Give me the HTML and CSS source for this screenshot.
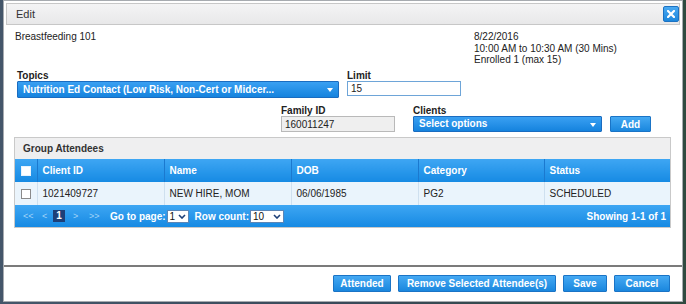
FILE: index.html
```html
<!DOCTYPE html>
<html lang="en">

<head>
  <meta charset="UTF-8">
  <title>Edit Group Class</title>
  <link rel="stylesheet" href="styles.css">
</head>

<body>
  <div class="dialog">

    <div class="titlebar">
      <span class="title">Edit</span>
      <button class="close">
        <svg width="8" height="8" viewBox="0 0 8 8"><path d="M1 1L7 7M7 1L1 7" stroke="#fff" stroke-width="2.2" stroke-linecap="square"/></svg>
      </button>
    </div>

    <div class="info">
      <div>Breastfeeding 101</div>
      <div>8/22/2016<br>10:00 AM to 10:30 AM (30 Mins)<br>Enrolled 1 (max 15)</div>
    </div>

    <div class="row row-topics">
      <div class="field topics">
        <label>Topics</label>
        <div class="dropdown">Nutrition Ed Contact (Low Risk, Non-Cert or Midcer...<i class="caret"></i></div>
      </div>
      <div class="field limit">
        <label>Limit</label>
        <input class="text" type="text" value="15">
      </div>
    </div>

    <div class="row row-clients">
      <div class="field family">
        <label>Family ID</label>
        <input class="text readonly" type="text" value="160011247" readonly>
      </div>
      <div class="field clients">
        <label>Clients</label>
        <div class="dropdown small">Select options<i class="caret"></i></div>
      </div>
      <button class="btn add">Add</button>
    </div>

    <div class="panel">
      <div class="panel-head">Group Attendees</div>
      <table class="grid">
        <colgroup>
          <col style="width:22px">
          <col style="width:127px">
          <col style="width:127px">
          <col style="width:127px">
          <col style="width:126px">
          <col>
        </colgroup>
        <thead>
          <tr>
            <th class="col-check"><span class="check"></span></th>
            <th>Client ID</th>
            <th>Name</th>
            <th>DOB</th>
            <th>Category</th>
            <th>Status</th>
          </tr>
        </thead>
        <tbody>
          <tr>
            <td class="col-check"><span class="check"></span></td>
            <td>1021409727</td>
            <td>NEW HIRE, MOM</td>
            <td>06/06/1985</td>
            <td>PG2</td>
            <td>SCHEDULED</td>
          </tr>
        </tbody>
      </table>
      <div class="pager">
        <span class="pg first">&lt;&lt;</span>
        <span class="pg prev">&lt;</span>
        <span class="pg-current">1</span>
        <span class="pg next">&gt;</span>
        <span class="pg last">&gt;&gt;</span>
        <span class="pg-label">Go to page:</span>
        <span class="mini page-select">1<svg width="8" height="5" viewBox="0 0 8 5"><path d="M1 1L4 4L7 1" fill="none" stroke="#1d3f78" stroke-width="1.6"/></svg></span>
        <span class="pg-label">Row count:</span>
        <span class="mini count-select">10<svg width="8" height="5" viewBox="0 0 8 5"><path d="M1 1L4 4L7 1" fill="none" stroke="#1d3f78" stroke-width="1.6"/></svg></span>
        <span class="showing">Showing 1-1 of 1</span>
      </div>
    </div>

    <div class="footer">
      <button class="btn attended">Attended</button>
      <button class="btn remove">Remove Selected Attendee(s)</button>
      <button class="btn save">Save</button>
      <button class="btn cancel">Cancel</button>
    </div>

  </div>
</body>

</html>
```

FILE: styles.css
```css
*,
*::before,
*::after {
  box-sizing: border-box;
}

body {
  margin: 0;
  height: 304px;
  overflow: hidden;
  font-family: 'Liberation Sans', Arial, sans-serif;
  font-size: 10px;
  color: #222;
  background: linear-gradient(to right, #44566a 0%, #3a4a5a 50%, #2f4a40 100%);
}

.dialog {
  display: flex;
  flex-direction: column;
  width: 680px;
  height: 302px;
  margin-left: 3px;
  background-color: #fff;
  border: 1px solid #a7abb0;
}

/* title bar */

.titlebar {
  display: flex;
  justify-content: space-between;
  align-items: center;
  height: 22px;
  margin: 2px 2px 0;
  padding: 0 0 0 9px;
  font-size: 11px;
  color: #333;
  border: 1px solid #c7c7c7;
  background-image: linear-gradient(#f4f4f5, #e8e8e9);
}

.close {
  display: flex;
  justify-content: center;
  align-items: center;
  width: 16px;
  height: 16px;
  padding: 0;
  border: 1px solid #1c72c2;
  border-radius: 2px;
  background-image: linear-gradient(#4aa9f2, #1c86dc);
}

/* header info */

.info {
  display: grid;
  grid-template-columns: 459px auto;
  height: 35px;
  margin: 6px 0 0 11px;
  line-height: 11.5px;
}

.row {
  display: flex;
}

.row-topics {
  gap: 8px;
  margin: 4px 0 0 13px;
}

.row-clients {
  align-items: flex-end;
  margin: 7px 0 0 277px;
}

.field label {
  display: block;
  font-weight: bold;
  line-height: 11px;
  color: #222;
}

.topics {
  width: 322px;
}

.limit {
  width: 114px;
}

.family {
  width: 114px;
}

.clients {
  width: 189px;
  margin-left: 18px;
}

.dropdown {
  position: relative;
  height: 17px;
  padding: 0 5px;
  line-height: 15px;
  font-weight: bold;
  color: #fff;
  white-space: nowrap;
  border: 1px solid #1a6cc0;
  border-radius: 1px;
  background-image: linear-gradient(#3aa0f2, #1583de);
}

.dropdown.small {
  height: 16px;
  line-height: 14px;
}

.caret {
  position: absolute;
  top: 6px;
  right: 5px;
  border-left: 3.5px solid transparent;
  border-right: 3.5px solid transparent;
  border-top: 4px solid #fff;
}

.text {
  display: block;
  width: 100%;
  height: 15px;
  margin: 0;
  padding: 0 3px;
  font: 10px 'Liberation Sans', Arial, sans-serif;
  color: #222;
  border: 1px solid #6ea5d8;
  background-color: #fff;
  outline: none;
}

.text.readonly {
  height: 16px;
  border-color: #b9b9b9;
  background-color: #efefef;
}

.btn {
  height: 17px;
  padding: 0;
  font: bold 10px 'Liberation Sans', Arial, sans-serif;
  white-space: nowrap;
  color: #fff;
  border: 1px solid #1a74c6;
  border-radius: 1px;
  background-image: linear-gradient(#45a9f3, #1a87de);
}

.add {
  width: 41px;
  height: 16px;
  margin-left: 8px;
}

/* attendees panel */

.panel {
  width: 657px;
  margin: 5px 0 0 10px;
  border: 1px solid #c9c9c9;
}

.panel-head {
  height: 21px;
  padding-left: 8px;
  line-height: 21px;
  font-weight: bold;
  color: #333;
  background-color: #efeff0;
}

.grid {
  width: 100%;
  border-collapse: collapse;
  table-layout: fixed;
}

.grid th {
  height: 23px;
  padding: 0 5px;
  text-align: left;
  font-weight: bold;
  color: #fff;
  border-left: 1px solid #1b79cf;
  background-image: linear-gradient(#3ea6f3, #168ae3);
}

.grid td {
  height: 23px;
  padding: 0 5px;
  border-left: 1px solid #cfe0ef;
  background-color: #eaf4fc;
}

.grid .col-check {
  padding: 0 0 0 6px;
  border-left: none;
}

.check {
  display: block;
  width: 10px;
  height: 10px;
  border: 1px solid #8a8a8a;
  background-color: #fff;
}

th .check {
  border-color: #e8f3fd;
}

.pager {
  display: flex;
  align-items: center;
  height: 22px;
  padding: 0 4px 0 8px;
  font-weight: bold;
  color: #fff;
  background-image: linear-gradient(#3ea6f3, #168ae3);
}

.pg {
  font-weight: normal;
  font-size: 9px;
  color: #a3d4f8;
}

.first {
  width: 12px;
  margin-right: 7px;
}

.prev {
  width: 6px;
  margin-right: 5px;
}

.pg-current {
  width: 12px;
  height: 12px;
  margin-right: 8px;
  line-height: 12px;
  text-align: center;
  background-color: #1d3f78;
}

.next {
  width: 6px;
  margin-right: 10px;
}

.last {
  width: 12px;
  margin-right: 9px;
}

.mini {
  display: flex;
  justify-content: space-between;
  align-items: center;
  height: 13px;
  margin: 0 6px 0 1px;
  padding: 0 2px;
  font-weight: normal;
  color: #111;
  border: 1px solid #5a86b8;
  background-color: #fff;
}

.page-select {
  width: 22px;
}

.count-select {
  width: 34px;
}

.showing {
  margin-left: auto;
}

/* footer buttons */

.footer {
  display: flex;
  justify-content: flex-end;
  gap: 7px;
  height: 36px;
  margin-top: auto;
  padding: 8px 12px 0 0;
  border-top: 2px solid #7b7b7b;
}

.attended {
  width: 58px;
}

.remove {
  width: 158px;
}

.save {
  width: 44px;
}

.cancel {
  width: 56px;
}
```
